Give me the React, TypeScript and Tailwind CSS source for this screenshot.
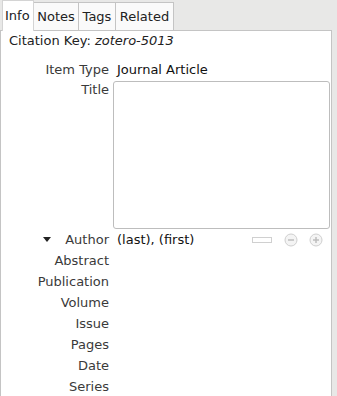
import React from 'react';

const rows = ['Abstract', 'Publication', 'Volume', 'Issue', 'Pages', 'Date', 'Series'];

function Label({ children }: { children: React.ReactNode }) {
  return <div className="w-[108px] shrink-0 text-right text-[#3a3a3a]">{children}</div>;
}

function CircleBtn({ plus }: { plus?: boolean }) {
  return (
    <svg width="14" height="14" viewBox="0 0 14 14">
      <circle cx="7" cy="7" r="6" fill="#f4f4f4" stroke="#cfcfcf" />
      <rect x="4" y="6.25" width="6" height="1.5" fill="#bdbdbd" />
      {plus && <rect x="6.25" y="4" width="1.5" height="6" fill="#bdbdbd" />}
    </svg>
  );
}

export default function App() {
  return (
    <div className="h-[396px] w-[337px] overflow-hidden bg-[#e8e8e7] font-['DejaVu_Sans',sans-serif] text-[13px] text-[#222]">
      <div className="flex h-[30px] items-end pl-[2px]">
        <div className="relative z-10 -mb-px flex h-[31px] w-[32px] items-center border-x border-t border-[#d4d4d4] bg-white pl-[2px]">Info</div>
        <div className="flex h-[28px] w-[45px] items-center justify-center border-r border-t border-[#c4c4c4] bg-[#fafafa]">Notes</div>
        <div className="flex h-[28px] w-[37px] items-center justify-center border-r border-t border-[#c4c4c4] bg-[#fafafa]">Tags</div>
        <div className="flex h-[28px] w-[58px] items-center justify-center border-r border-t border-[#c4c4c4] bg-[#fafafa]">Related</div>
      </div>
      <div className="h-[366px] w-[332px] border-x border-t border-[#c4c4c4] bg-white">
        <div className="pl-[8px] leading-[20px]">
          Citation Key: <span className="italic">zotero-5013</span>
        </div>
        <div className="mt-[9px] flex leading-[20px]">
          <Label>Item Type</Label>
          <div className="pl-[8px] text-[#111]">Journal Article</div>
        </div>
        <div className="flex leading-[20px]">
          <Label>Title</Label>
          <div className="ml-[4px] mt-[1px] h-[148px] w-[217px] rounded-[3px] border border-[#bdbdbd]" />
        </div>
        <div className="flex items-center leading-[21px]">
          <div className="flex w-[108px] items-center justify-end text-[#3a3a3a]">
            <svg width="8" height="5" viewBox="0 0 8 5" className="mr-[14px]">
              <path d="M0 0 L8 0 L4 5 Z" fill="#222" />
            </svg>
            Author
          </div>
          <div className="flex-1 pl-[8px] text-[#111]">(last), (first)</div>
          <div className="mr-[8px] flex items-center gap-[11px]">
            <div className="mr-[1px] h-[6px] w-[20px] border border-[#d0d0d0] bg-white" />
            <CircleBtn />
            <CircleBtn plus />
          </div>
        </div>
        {rows.map((r) => (
          <div key={r} className="flex leading-[21px]">
            <Label>{r}</Label>
          </div>
        ))}
      </div>
    </div>
  );
}
